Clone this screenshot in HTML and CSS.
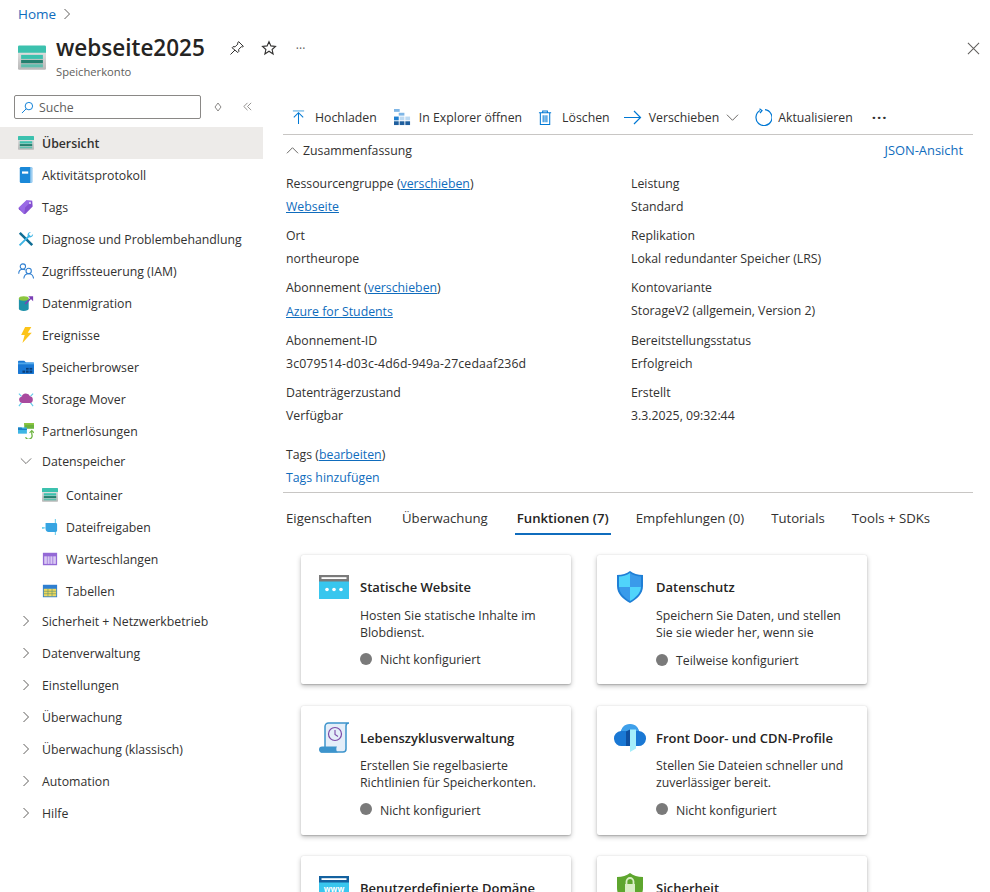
FILE: index.html
```html
<!DOCTYPE html>
<html lang="de">
<head>
<meta charset="utf-8">
<title>webseite2025</title>
<link rel="stylesheet" href="styles.css">
</head>
<body>
<svg class="defs" width="0" height="0" aria-hidden="true">
  <defs>
    <linearGradient id="body-g" x1="0" y1="0" x2="0" y2="1"><stop offset="0" stop-color="#e8e8e8"/><stop offset="1" stop-color="#b8b8b8"/></linearGradient>
    <symbol id="storage" viewBox="0 0 18 18">
      <path d="M0 2.500h18v13.200a.8.8 0 0 1-.8.8H.8a.8.8 0 0 1-.8-.8z" fill="url(#body-g)"/>
      <path d="M0 1.800a.8.8 0 0 1 .8-.8h16.400a.8.8 0 0 1 .8.8V5.600H0z" fill="#3cc1ae"/>
      <path d="M2 7h14v2.600H2z" fill="#3cc1ae"/>
      <path d="M2 10.200h14v2.200H2z" fill="#24806f"/>
      <path d="M2 13h14v2H2z" fill="#5fbfae"/>
    </symbol>
    <symbol id="chev-r" viewBox="0 0 12 12"><path d="M3.500 1l5 5-5 5" fill="none" stroke="#605e5c" stroke-width="1"/></symbol>
    <symbol id="chev-d" viewBox="0 0 14 14"><path d="M1 4l6 6 6-6" fill="none" stroke="#605e5c" stroke-width="1"/></symbol>
  </defs>
</svg>
<div class="page">
  <nav class="crumbs"><a class="link" href="#">Home</a><svg class="crumb-chev"><use href="#chev-r"/></svg></nav>
  <header class="head">
    <svg class="head-icon"><use href="#storage"/></svg>
    <div class="head-text">
      <div class="head-title-row">
        <h1 class="title">webseite2025</h1>
        <svg class="head-btn" viewBox="0 0 16 16"><path d="M9.600 1.600l4.800 4.800-1 .5-1-.2-2.700 2.700.1 2.100-1 1L3 7.700l1-1 2.100.1 2.700-2.700-.2-1zM6 10l-4.500 4.500" fill="none" stroke="#323130" stroke-width="1"/></svg>
        <svg class="head-btn" viewBox="0 0 16 16"><path d="M8 1.700l1.900 4.200 4.600.5-3.400 3.100 1 4.500L8 11.200l-4.100 2.800 1-4.500L1.500 6.400l4.600-.5z" fill="none" stroke="#323130" stroke-width="1.100"/></svg>
        <span class="head-more">···</span>
      </div>
      <div class="subtitle">Speicherkonto</div>
    </div>
    <svg class="close" viewBox="0 0 14 14"><path d="M1 1l12 12M13 1L1 13" stroke="#605e5c" stroke-width="1.100" fill="none"/></svg>
  </header>
  <div class="body">
    <aside class="side">
      <div class="search-row">
        <div class="search">
          <svg class="search-ic" viewBox="0 0 14 14"><circle cx="8.500" cy="5.500" r="4" fill="none" stroke="#0078d4"/><path d="M5.500 8.500L1 13" stroke="#0078d4" fill="none"/></svg>
          <span>Suche</span>
        </div>
        <svg class="sort" viewBox="0 0 10 12"><path d="M5 2L8 6 5 10 2 6z" fill="none" stroke="#8a8886"/></svg>
        <svg class="collapse" viewBox="0 0 12 12"><path d="M6 2L2 6l4 4M10 2L6 6l4 4" fill="none" stroke="#8a8886"/></svg>
      </div>
      <ul class="menu">
        <li class="item active"><svg class="mi"><use href="#storage"/></svg>Übersicht</li>
        <li class="item"><svg class="mi" viewBox="0 0 18 18"><rect x="2" y="0" width="14" height="18" rx="1.500" fill="#1a88d8"/><rect x="13.800" y="0" width="2.200" height="18" fill="#9dcdf0"/><rect x="4.500" y="5" width="7" height="2.500" fill="#fff"/></svg>Aktivitätsprotokoll</li>
        <li class="item"><svg class="mi" viewBox="0 0 18 18"><path d="M1 9.500L9.500 1.500l6.500.5.500 6.500-8 8a1.500 1.500 0 0 1-2 0l-5.500-5a1.500 1.500 0 0 1 0-2z" fill="#8450d0"/><path d="M1 9.500L9.500 1.500 16 2l-8 7.500-1 7.800z" fill="#a67af4" opacity=".6"/><circle cx="13.500" cy="4.500" r="1.100" fill="#efe8fb"/></svg>Tags</li>
        <li class="item"><svg class="mi" viewBox="0 0 18 18"><path d="M3 1l14 14-2 2L1 3z" fill="#0f6d94"/><path d="M1 15.500L11 5.500c-.8-2 .5-4.500 3.500-4.500L12 3.500 14.500 6 17 3.500c0 3-2.500 4.300-4.500 3.500l-10 10z" fill="#3eb5e5"/></svg>Diagnose und Problembehandlung</li>
        <li class="item"><svg class="mi" viewBox="0 0 18 18" fill="none" stroke="#2f7fd0" stroke-width="1.200"><circle cx="5.500" cy="4" r="3"/><path d="M.8 12c0-3 2-5 4.700-5 1.200 0 2.200.4 3 1"/><circle cx="12" cy="9" r="3"/><path d="M6.500 17.500c.3-3 2.500-5.500 5.500-5.500s5.200 2.500 5.500 5.500"/></svg>Zugriffssteuerung (IAM)</li>
        <li class="item"><svg class="mi" viewBox="0 0 18 18"><path d="M1 4h11v11.500c0 1.500-2.500 2.500-5.500 2.500S1 17 1 15.500z" fill="#1e91a8"/><ellipse cx="6.500" cy="4" rx="5.500" ry="2.500" fill="#8cc63f"/><path d="M8 10l7-7" stroke="#7b3fb5" stroke-width="1.600"/><path d="M11.500 1.500H17V7z" fill="#7b3fb5"/></svg>Datenmigration</li>
        <li class="item"><svg class="mi" viewBox="0 0 18 18"><path d="M8 0h7l-4 6.500h4.500L5 18l2.500-9H3.500z" fill="#fcc419"/></svg>Ereignisse</li>
        <li class="item"><svg class="mi" viewBox="0 0 18 18"><path d="M0 3a1 1 0 0 1 1-1h6l2 2h8a1 1 0 0 1 1 1v11a1 1 0 0 1-1 1H1a1 1 0 0 1-1-1z" fill="#1a78d4"/><path d="M0 4h18v2H0z" fill="#50a7ea"/><g fill="#0b3f7a"><rect x="5" y="13" width="3" height="2.500"/><rect x="9" y="13" width="3" height="2.500"/><rect x="13" y="13" width="3" height="2.500"/><rect x="9" y="10" width="3" height="2"/><rect x="13" y="10" width="3" height="2"/></g></svg>Speicherbrowser</li>
        <li class="item"><svg class="mi" viewBox="0 0 18 18"><path d="M1 3l3 3M17 3l-3 3M1 17l3-4M17 17l-3-4" stroke="#5fc9e8" stroke-width="1.200"/><path d="M4.500 13.500A3.500 3.500 0 0 1 4 6.600 5 5 0 0 1 13.500 6a3.800 3.800 0 0 1 0 7.500z" fill="#a84a9e"/></svg>Storage Mover</li>
        <li class="item"><svg class="mi" viewBox="0 0 18 18"><rect x="7" y="0" width="11" height="6.500" fill="#6cb33f"/><rect x="7" y="0" width="11" height="2" fill="#8cc63f"/><path d="M0 5h10v7H0z" fill="#3eb5e5"/><path d="M0 5h4l1 1.500h5V8H0z" fill="#1b80c4"/><path d="M15.500 9v3.500a3.500 3.500 0 0 1-7 3.500" fill="none" stroke="#6cb33f" stroke-width="1.400"/><path d="M13 11l2.500-2.500L18 11" fill="none" stroke="#6cb33f" stroke-width="1.200"/></svg>Partnerlösungen</li>
        <li class="item group"><svg class="gc"><use href="#chev-d"/></svg>Datenspeicher</li>
        <li class="item sub"><svg class="mi"><use href="#storage"/></svg>Container</li>
        <li class="item sub"><svg class="mi" viewBox="0 0 18 18"><path d="M4 4.500h11.500a1.500 1.500 0 0 1 1.500 1.500v7a1.500 1.500 0 0 1-1.500 1.500H7.500A3.500 3.500 0 0 1 4 11z" fill="#36a4e2"/><path d="M0 10h4M15 0v4.500M15 14.500v3.500" stroke="#5fc9e8" stroke-width="1.100"/><circle cx="1" cy="10" r="1" fill="#5fc9e8"/></svg>Dateifreigaben</li>
        <li class="item sub"><svg class="mi" viewBox="0 0 18 18"><rect x="1" y="2" width="16" height="14" fill="#9469d6"/><rect x="2.500" y="6" width="3" height="8.500" fill="#d9c9f3"/><rect x="6.200" y="6" width="2.400" height="8.500" fill="#d9c9f3"/><rect x="9.400" y="6" width="2.400" height="8.500" fill="#d9c9f3"/><rect x="12.600" y="6" width="3" height="8.500" fill="#d9c9f3"/></svg>Warteschlangen</li>
        <li class="item sub"><svg class="mi" viewBox="0 0 18 18"><rect x="1" y="2" width="16" height="14" fill="#2f7fd0"/><rect x="2" y="6.500" width="14" height="8.500" fill="#f0d95c"/><path d="M2 9.300h14M2 12.100h14M6.700 6.500V15M11.300 6.500V15" stroke="#6d9a70" stroke-width=".8"/></svg>Tabellen</li>
        <li class="item group"><svg class="gc"><use href="#chev-r"/></svg>Sicherheit + Netzwerkbetrieb</li>
        <li class="item group"><svg class="gc"><use href="#chev-r"/></svg>Datenverwaltung</li>
        <li class="item group"><svg class="gc"><use href="#chev-r"/></svg>Einstellungen</li>
        <li class="item group"><svg class="gc"><use href="#chev-r"/></svg>Überwachung</li>
        <li class="item group"><svg class="gc"><use href="#chev-r"/></svg>Überwachung (klassisch)</li>
        <li class="item group"><svg class="gc"><use href="#chev-r"/></svg>Automation</li>
        <li class="item group"><svg class="gc"><use href="#chev-r"/></svg>Hilfe</li>
      </ul>
    </aside>
    <main class="main">
      <div class="toolbar">
        <span class="tool wider"><svg class="ti" viewBox="0 0 16 16"><path d="M2 1h12" stroke="#50a7e0" fill="none" stroke-width="1.100"/><path d="M8 15V2.800M3 7.800l5-5 5 5" fill="none" stroke="#0078d4" stroke-width="1.100"/></svg>Hochladen</span>
        <span class="tool"><svg class="ti wide" viewBox="0 0 18 18"><g fill="#1f5f9e"><rect x="0" y="13" width="5" height="4"/><rect x="6" y="13" width="5" height="4"/><rect x="12" y="13" width="5" height="4"/></g><g fill="#7fb6e6"><rect x="0" y="0" width="6" height="3"/><rect x="5" y="4" width="6" height="3"/></g><g fill="#1f7fd0"><rect x="0" y="8" width="5" height="4"/></g><g fill="#bcd9f2"><rect x="6" y="8" width="5" height="4"/><rect x="12" y="8" width="5" height="4"/></g></svg>In Explorer öffnen</span>
        <span class="tool tight"><svg class="ti" viewBox="0 0 16 16" fill="none" stroke="#0078d4" stroke-width="1.100"><path d="M1 3h13M5 3V1h5v2M2.500 3v12.500h10V3M5.500 5.500v7.500M7.500 5.500v7.500M9.500 5.500v7.500"/></svg>Löschen</span>
        <span class="tool move"><svg class="ti long" viewBox="0 0 18 16"><path d="M0 8h16.500M10 1.500L16.500 8 10 14.500" fill="none" stroke="#0078d4" stroke-width="1.200"/></svg>Verschieben<svg class="tool-chev"><use href="#chev-d"/></svg></span>
        <span class="tool"><svg class="ti refresh" viewBox="0 0 18 18"><path d="M6 2.600A8 8 0 1 0 11 1.600M5.500.8L8 2.600 6 5" fill="none" stroke="#0078d4" stroke-width="1.200"/></svg>Aktualisieren</span>
        <span class="tool-more">···</span>
      </div>
      <div class="summary-bar">
        <span class="summary-toggle"><svg class="sum-chev" viewBox="0 0 14 14"><path d="M1 10l6-6 6 6" fill="none" stroke="#605e5c"/></svg>Zusammenfassung</span>
        <a class="link json" href="#">JSON-Ansicht</a>
      </div>
      <section class="fields">
        <div class="field"><div>Ressourcengruppe (<a class="link u" href="#">verschieben</a>)</div><div><a class="link u" href="#">Webseite</a></div></div>
        <div class="field"><div>Leistung</div><div>Standard</div></div>
        <div class="field"><div>Ort</div><div>northeurope</div></div>
        <div class="field"><div>Replikation</div><div>Lokal redundanter Speicher (LRS)</div></div>
        <div class="field"><div>Abonnement (<a class="link u" href="#">verschieben</a>)</div><div class="low"><a class="link u" href="#">Azure for Students</a></div></div>
        <div class="field"><div>Kontovariante</div><div>StorageV2 (allgemein, Version 2)</div></div>
        <div class="field"><div>Abonnement-ID</div><div class="sub-id">3c079514-d03c-4d6d-949a-27cedaaf236d</div></div>
        <div class="field"><div>Bereitstellungsstatus</div><div>Erfolgreich</div></div>
        <div class="field"><div>Datenträgerzustand</div><div>Verfügbar</div></div>
        <div class="field"><div>Erstellt</div><div>3.3.2025, 09:32:44</div></div>
      </section>
      <section class="tags">
        <div>Tags (<a class="link u" href="#">bearbeiten</a>)</div>
        <div><a class="link" href="#">Tags hinzufügen</a></div>
      </section>
      <div class="tabs">
        <span class="tab first">Eigenschaften</span>
        <span class="tab">Überwachung</span>
        <span class="tab selected">Funktionen (7)</span>
        <span class="tab narrow">Empfehlungen (0)</span>
        <span class="tab narrow">Tutorials</span>
        <span class="tab">Tools + SDKs</span>
      </div>
      <section class="cards">
        <article class="card">
          <svg class="ci web" viewBox="0 0 30 24"><rect width="30" height="24" fill="#38c6ee"/><rect width="30" height="6.500" fill="#7a7a7a"/><rect x="2.500" y="2.200" width="25" height="1.800" fill="#fff"/><circle cx="8" cy="14.500" r="1.800" fill="#fff"/><circle cx="15" cy="14.500" r="1.800" fill="#fff"/><circle cx="22" cy="14.500" r="1.800" fill="#fff"/></svg>
          <div class="cb"><h3 class="ct">Statische Website</h3><p class="cd">Hosten Sie statische Inhalte im Blobdienst.</p><div class="cs">Nicht konfiguriert</div></div>
        </article>
        <article class="card">
          <svg class="ci shield" viewBox="0 0 26 32"><path d="M13 0c3.500 2.600 7.500 3.800 13 4v11c0 8-6 13-13 17C6 28 0 23 0 15V4C5.500 3.800 9.500 2.600 13 0z" fill="#1f7fd6"/><path d="M13 2v14H2V5.500C6 5.200 10 4.200 13 2z" fill="#50d4fb"/><path d="M13 16h11c-.5 6-5 10.500-11 14z" fill="#50d4fb"/><path d="M13 2c3 2.200 7 3.200 11 3.500V16H13z" fill="#3a9bea"/><path d="M13 16v14C7 26.500 2.500 22 2 16z" fill="#3a9bea"/></svg>
          <div class="cb"><h3 class="ct">Datenschutz</h3><p class="cd">Speichern Sie Daten, und stellen Sie sie wieder her, wenn sie</p><div class="cs low">Teilweise konfiguriert</div></div>
        </article>
        <article class="card">
          <svg class="ci scroll" viewBox="0 0 30 31"><path d="M6 4.500a3.500 3.500 0 0 1 3.500-3.500H30c-2 0-3 1.500-3 3v23a3 3 0 0 1-3 3H3l3-3z" fill="#e4eef9" stroke="#3d94cc" stroke-width="1.500"/><path d="M0 27.500a3 3 0 0 1 3-3h15c-1 1-1 5 1 6H3a3 3 0 0 1-3-3z" fill="#3d94cc"/><circle cx="16" cy="12" r="6.500" fill="none" stroke="#7b4aa8" stroke-width="1.200"/><path d="M16 8v4.500l3 2" fill="none" stroke="#7b4aa8" stroke-width="1.100"/></svg>
          <div class="cb"><h3 class="ct">Lebenszyklusverwaltung</h3><p class="cd">Erstellen Sie regelbasierte Richtlinien für Speicherkonten.</p><div class="cs">Nicht konfiguriert</div></div>
        </article>
        <article class="card">
          <svg class="ci cloud" viewBox="0 0 32 28"><path d="M8 22a7.500 7.500 0 0 1-1-15 9.500 9.500 0 0 1 18 0 7.500 7.500 0 0 1-1 15z" fill="#1a78d4"/><path d="M16 0a9.500 9.500 0 0 1 9 7H7a9.500 9.500 0 0 1 9-7z" fill="#3fa0ea"/><path d="M16 5.500V28l6-3.500V5.500z" fill="#a5eefb"/><path d="M16 5.500l-4 2V22h4z" fill="#0f50a0"/></svg>
          <div class="cb"><h3 class="ct">Front Door- und CDN-Profile</h3><p class="cd">Stellen Sie Dateien schneller und zuverlässiger bereit.</p><div class="cs">Nicht konfiguriert</div></div>
        </article>
        <article class="card">
          <svg class="ci web" viewBox="0 0 30 24"><rect width="30" height="24" fill="#38c6ee"/><rect width="30" height="6.500" fill="#13619f"/><rect x="2.500" y="2.200" width="25" height="1.800" fill="#fff"/><text x="15" y="16" text-anchor="middle" class="www">www</text></svg>
          <div class="cb"><h3 class="ct">Benutzerdefinierte Domäne</h3></div>
        </article>
        <article class="card">
          <svg class="ci shield lock" viewBox="0 0 26 32"><path d="M13 0c3.500 2.600 7.500 3.800 13 4v11c0 8-6 13-13 17C6 28 0 23 0 15V4C5.500 3.800 9.500 2.600 13 0z" fill="#5ea62e"/><rect x="8" y="11" width="10" height="9" fill="#d8eec4"/><path d="M9.500 11V8.500a3.500 3.500 0 0 1 7 0V11" fill="none" stroke="#d8eec4" stroke-width="1.800"/></svg>
          <div class="cb"><h3 class="ct">Sicherheit</h3></div>
        </article>
      </section>
    </main>
  </div>
</div>
</body>
</html>
```
FILE: styles.css
```css
* { box-sizing: border-box; }
html, body { margin: 0; padding: 0; height: 100%; overflow: hidden; background: #fff; }
body { font-family: "Open Sans", "Noto Sans", "Liberation Sans", sans-serif; font-size: 12.3px; color: #323130; }
.defs { display: block; height: 0; }
.page { width: 990px; height: 892px; overflow: hidden; }
.link { color: #0f6cbd; text-decoration: none; }
.link.u { text-decoration: underline; }

.crumbs { display: flex; align-items: center; height: 28px; padding-left: 18px; font-size: 13.5px; }
.crumb-chev { width: 12px; height: 12px; margin-left: 5px; }

.head { display: flex; align-items: flex-start; height: 67px; padding: 7px 10px 0 18px; }
.head-icon { width: 28px; height: 28px; margin-top: 9px; margin-right: 10px; }
.head-text { flex: 1; }
.head-title-row { display: flex; align-items: center; height: 26px; }
.title { margin: 0; font-size: 22.500px; line-height: 26px; font-weight: 600; color: #252423; }
.head-btn { width: 16px; height: 16px; margin-left: 16px; }
.head-btn:first-of-type { margin-left: 24px; }
.head-more { margin-left: 19px; color: #605e5c; font-size: 12px; }
.subtitle { font-size: 11.200px; color: #605e5c; margin-top: 3px; }
.close { width: 13px; height: 13px; margin-top: 7px; }

.body { display: flex; height: 797px; }
.side { width: 263px; flex: none; }
.search-row { display: flex; align-items: flex-start; padding-left: 14px; height: 32px; }
.search { width: 187px; height: 24px; border: 1px solid #8a8886; border-radius: 2px; display: flex; align-items: center; padding-left: 6px; color: #605e5c; }
.search-ic { width: 13px; height: 13px; margin-right: 5px; }
.sort { width: 10px; height: 12px; margin: 6px 0 0 12px; }
.collapse { width: 11px; height: 11px; margin: 6px 0 0 19px; }

.menu { list-style: none; margin: 0; padding: 0; }
.item { display: flex; align-items: center; height: 32px; padding-left: 18px; color: #323130; white-space: nowrap; }
.item.active { background: #edebe9; font-weight: 600; }
.mi { width: 16px; height: 16px; margin-right: 8px; flex: none; }
.item.sub { padding-left: 42px; }
.item.group { padding-left: 20px; height: 28px; margin-bottom: 4px; }
.gc { width: 12px; height: 12px; margin-right: 10px; }

.main { flex: 1; padding: 0 17px 0 20px; min-width: 0; }
.toolbar { display: flex; align-items: center; height: 40px; padding: 5px 0 0 8px; border-bottom: 1px solid #c8c6c4; }
.tool { display: flex; align-items: center; margin-right: 16px; white-space: nowrap; }
.tool.wider { margin-right: 17px; }
.tool.tight { margin-right: 14px; }
.tool.move { margin-right: 15px; }
.ti { width: 15px; height: 17px; margin-right: 9px; }
.ti.wide { width: 17px; margin-right: 8px; }
.ti.long { width: 18px; margin-right: 7px; }
.ti.refresh { width: 18px; height: 18px; margin-right: 6px; }
.tool-chev { width: 13px; height: 13px; margin-left: 7px; }
.tool-more { font-size: 15px; font-weight: 700; letter-spacing: 1px; color: #323130; margin-left: 3px; }

.summary-bar { display: flex; justify-content: space-between; align-items: center; height: 29px; padding: 1px 10px 0 3px; }
.summary-toggle { display: flex; align-items: center; }
.sum-chev { width: 13px; height: 13px; margin-right: 4px; }
.json { font-size: 12.900px; }

.fields { display: grid; grid-template-columns: 345px 1fr; grid-template-rows: 52px 52px 53px 52px 52px; padding: 8px 0 0 3px; }
.field > div { line-height: 23px; }
.field > .low { padding-top: 1px; }
.field > .sub-id { letter-spacing: .11px; }
.tags { padding: 0 0 3px 3px; line-height: 23px; border-bottom: 1px solid #c8c6c4; margin-top: 10px; }

.tabs { display: flex; padding-left: 3px; font-size: 13.200px; }
.tab { display: flex; align-items: center; height: 42px; padding-top: 10px; margin-right: 29px; border-bottom: 2px solid transparent; }
.tab.first { margin-right: 30px; }
.tab.narrow { margin-right: 27px; }
.tab.selected { font-weight: 600; border-bottom-color: #0f6cbd; color: #252423; padding-left: 2px; padding-right: 2px; margin-left: -2px; margin-right: 25px; }

.cards { display: grid; grid-template-columns: 270px 270px; column-gap: 26px; row-gap: 21.500px; padding: 20px 0 0 18px; }
.card { display: flex; height: 129px; padding: 15px 18px 0 18px; background: #fff; border-radius: 2px; box-shadow: 0 2px 5px rgba(0,0,0,.26), 0 .3px 1.200px rgba(0,0,0,.16); }
.ci { width: 30px; flex: none; margin-right: 11px; }
.ci.web { height: 24px; margin-top: 5px; }
.ci.shield { width: 26px; height: 32px; margin: 1px 13px 0 2px; }
.ci.shield.lock { margin-top: 2px; }
.ci.scroll { height: 31px; margin-top: 1.500px; }
.ci.cloud { width: 32px; height: 28px; margin: 3.500px 10px 0 -1px; }
.cb { flex: 1; }
.ct { margin: 8px 0 0; font-size: 13px; font-weight: 600; line-height: 18px; color: #252423; }
.cd { margin: 10.500px 0 0; line-height: 17px; }
.cs { display: flex; align-items: center; margin-top: 10.500px; line-height: 18px; }
.cs.low { padding-top: 1px; }
.cs::before { content: ""; width: 12px; height: 12px; border-radius: 50%; background: #7a7a7a; margin: -3px 8px 0 0; }
.www { font: 700 8px "Open Sans", sans-serif; fill: #fff; }
```
